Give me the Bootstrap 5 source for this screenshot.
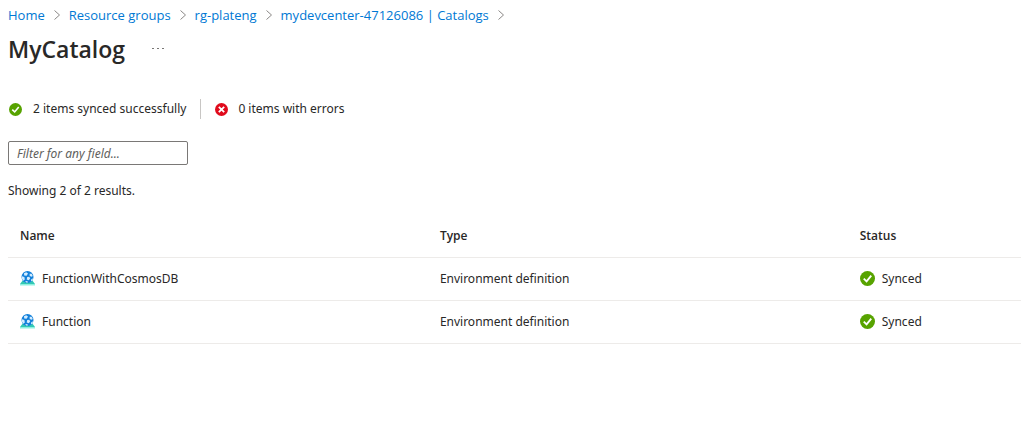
<!DOCTYPE html>
<html lang="en">
<head>
<meta charset="utf-8">
<meta name="viewport" content="width=device-width, initial-scale=1">
<title>MyCatalog</title>
<link href="https://cdn.jsdelivr.net/npm/bootstrap@5.3.0/dist/css/bootstrap.min.css" rel="stylesheet">
<style>
  body { font-family: "Noto Sans", sans-serif; font-size: 12px; line-height: 20px; color: #292827; background: #fff; }
  .crumbs { font-family: "Open Sans", sans-serif; font-size: 13px; padding-top: 5px; gap: 9px; }
  .crumbs a { color: #0078d4; text-decoration: none; }
  .crumbs li { gap: 9px; }
  .page-title { font-family: "Open Sans", sans-serif; font-size: 23px; line-height: 32px; font-weight: 600; }
  .more-btn { line-height: 0; margin-left: 27px; }
  .summary { margin-top: 34px; }
  .summary-item { gap: 10px; }
  .summary-item + .summary-item { margin-left: 14px; padding-left: 14px; border-left: 1px solid #c8c6c4; }
  .summary-item + .summary-item::before { content: none; }
  .filter { width: 180px; height: 24px; margin-top: 22px; padding: 2px 8px; font-size: 12px; border: 1px solid #7a7876; border-radius: 2px; color: #292827; }
  .filter::placeholder { color: #605e5c; font-style: italic; opacity: 1; }
  .result-count { margin-top: 16px; }
  .catalog { margin-top: 14px; table-layout: fixed; color: #292827; }
  .catalog th, .catalog td { padding: 11px 12px; border-bottom: 1px solid #edebe9; }
  .catalog th { font-family: "Open Sans", sans-serif; font-weight: 600; }
  .col-wide { width: 41.45%; }
  .cell-icon { gap: 7px; }
  .cell-icon svg { margin-bottom: 2px; }
</style>
</head>
<body>
<svg class="d-none" aria-hidden="true">
  <symbol id="ok" viewBox="0 0 16 16"><circle cx="8" cy="8" r="8" fill="#57a300"/><path d="M4 8.200 7 11l5-6" fill="none" stroke="#fff" stroke-width="2"/></symbol>
  <symbol id="fail" viewBox="0 0 16 16"><circle cx="8" cy="8" r="8" fill="#e00b1c"/><path d="m4.700 4.700 6.600 6.600m0-6.600-6.600 6.600" fill="none" stroke="#fff" stroke-width="2.200"/></symbol>
  <symbol id="chev" viewBox="0 0 6 10"><path d="m.5.5 5 4.500-5 4.500" fill="none" stroke="#8a8886"/></symbol>
  <symbol id="env" viewBox="0 0 15 15">
    <path d="M3 9h9l3 4H0z" fill="#32c8b4"/><path d="M0 13h15v1.500H0z" fill="#8df0df"/>
    <circle cx="7.500" cy="6" r="6" fill="#1380da"/>
    <path d="M4 2.300 6.200 1.200 8 2.500 6.600 4.700 4.200 4.500zM9.600 2.800l2-.1 1.200 2.200-1.200.9-1.900-.9zM7.200 6.100l2.100-.3.900 1.800-1.500 1.700-2-.9zM2 5.300l2.400.8.4 2.400-1.400 1.200-1.400-2zM11.100 8.400l1.800-1.200-.3 2-1.700 1.400zM5.300 10l2.200.2.500 1.400-1.900-.2z" fill="#d3ecff"/>
  </symbol>
</svg>

<div class="ps-2">
  <nav aria-label="Breadcrumb">
    <ol class="crumbs list-unstyled d-flex flex-wrap mb-0">
      <li class="d-flex align-items-center"><a href="#">Home</a><svg width="6" height="10" aria-hidden="true"><use href="#chev"/></svg></li>
      <li class="d-flex align-items-center"><a href="#">Resource groups</a><svg width="6" height="10" aria-hidden="true"><use href="#chev"/></svg></li>
      <li class="d-flex align-items-center"><a href="#">rg-plateng</a><svg width="6" height="10" aria-hidden="true"><use href="#chev"/></svg></li>
      <li class="d-flex align-items-center"><a href="#">mydevcenter-47126086 | Catalogs</a><svg width="6" height="10" aria-hidden="true"><use href="#chev"/></svg></li>
    </ol>
  </nav>

  <header class="d-flex align-items-center pt-2">
    <h1 class="page-title mb-0">MyCatalog</h1>
    <button type="button" class="more-btn btn border-0 p-0" aria-label="More actions">
      <svg width="12" height="2" fill="#797775"><path d="M0 0h2v1H0zM5 0h2v1H5zM10 0h2v1h-2z"/></svg>
    </button>
  </header>

  <div class="summary d-flex align-items-center">
    <div class="summary-item d-flex align-items-center"><svg width="15" height="13" aria-hidden="true"><use href="#ok"/></svg><span>2 items synced successfully</span></div>
    <div class="summary-item d-flex align-items-center"><svg width="13" height="13" aria-hidden="true"><use href="#fail"/></svg><span>0 items with errors</span></div>
  </div>

  <input class="filter form-control" type="text" placeholder="Filter for any field..." aria-label="Filter for any field">
  <p class="result-count mb-0">Showing 2 of 2 results.</p>

  <table class="catalog table mb-0">
    <thead>
      <tr><th class="col-wide" scope="col">Name</th><th class="col-wide" scope="col">Type</th><th scope="col">Status</th></tr>
    </thead>
    <tbody>
      <tr>
        <td><div class="cell-icon d-flex align-items-center"><svg width="15" height="15" aria-hidden="true"><use href="#env"/></svg><span>FunctionWithCosmosDB</span></div></td>
        <td>Environment definition</td>
        <td><div class="cell-icon d-flex align-items-center"><svg width="15" height="15" aria-hidden="true"><use href="#ok"/></svg><span>Synced</span></div></td>
      </tr>
      <tr>
        <td><div class="cell-icon d-flex align-items-center"><svg width="15" height="15" aria-hidden="true"><use href="#env"/></svg><span>Function</span></div></td>
        <td>Environment definition</td>
        <td><div class="cell-icon d-flex align-items-center"><svg width="15" height="15" aria-hidden="true"><use href="#ok"/></svg><span>Synced</span></div></td>
      </tr>
    </tbody>
  </table>
</div>
<script src="https://cdn.jsdelivr.net/npm/bootstrap@5.3.0/dist/js/bootstrap.bundle.min.js"></script>
</body>
</html>
